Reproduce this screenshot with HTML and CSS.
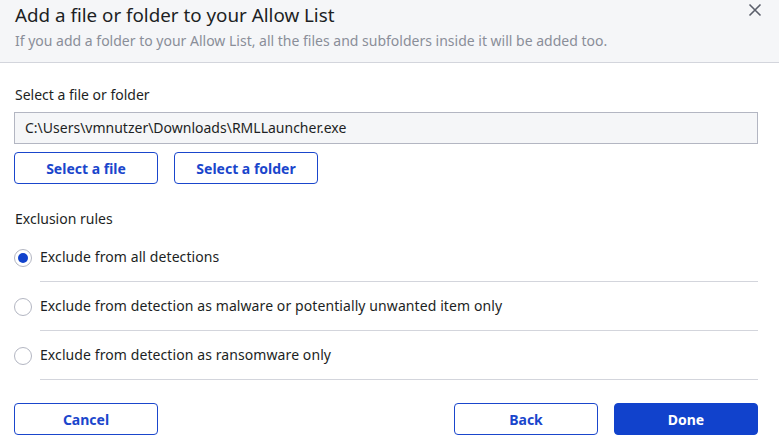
FILE: index.html
```html
<!DOCTYPE html>
<html>
<head>
<meta charset="utf-8">
<link rel="stylesheet" href="styles.css">
</head>
<body>
<div class="dialog">
  <header class="header">
    <div class="header-text">
      <h1 class="title">Add a file or folder to your Allow List</h1>
      <p class="subtitle">If you add a folder to your Allow List, all the files and subfolders inside it will be added too.</p>
    </div>
    <button class="close" aria-label="Close">
      <svg width="14" height="14" viewBox="0 0 14 14"><path d="M1.5 1.5 L12.5 12.5 M12.5 1.5 L1.5 12.5" stroke="#5b5f6b" stroke-width="1.6" fill="none"/></svg>
    </button>
  </header>
  <main class="content">
    <div class="label">Select a file or folder</div>
    <div class="path-field">C:\Users\vmnutzer\Downloads\RMLLauncher.exe</div>
    <div class="pick-row">
      <button class="btn btn-outline">Select a file</button>
      <button class="btn btn-outline">Select a folder</button>
    </div>
    <div class="label rules-label">Exclusion rules</div>
    <ul class="options">
      <li class="option">
        <span class="radio checked"></span>
        <span class="option-text">Exclude from all detections</span>
      </li>
      <li class="option">
        <span class="radio"></span>
        <span class="option-text">Exclude from detection as malware or potentially unwanted item only</span>
      </li>
      <li class="option">
        <span class="radio"></span>
        <span class="option-text">Exclude from detection as ransomware only</span>
      </li>
    </ul>
  </main>
  <footer class="footer">
    <button class="btn btn-outline">Cancel</button>
    <div class="footer-right">
      <button class="btn btn-outline">Back</button>
      <button class="btn btn-primary">Done</button>
    </div>
  </footer>
</div>
</body>
</html>
```

FILE: styles.css
```css
* { box-sizing: border-box; }
html, body { margin: 0; padding: 0; background: #ffffff; }
body {
  width: 779px;
  height: 448px;
  overflow: hidden;
  font-family: "Noto Sans", "Open Sans", sans-serif;
  color: #1d1f24;
}
.dialog { width: 779px; }
.header {
  display: flex;
  align-items: flex-start;
  height: 63px;
  background: #f5f6f8;
  border-bottom: 1px solid #d3d5dc;
  padding: 0 17px 0 15px;
}
.header-text { flex: 1; }
.title {
  margin: 2px 0 0 0;
  font-size: 18.8px;
  font-weight: 400;
  line-height: 26px;
  color: #1d1f24;
}
.subtitle {
  margin: 4px 0 0 0;
  font-size: 14px;
  line-height: 18px;
  color: #8a8e99;
}
.close {
  border: none;
  background: none;
  padding: 0;
  margin: 3px 0 0 0;
  width: 14px;
  height: 14px;
  display: flex;
}
.content { padding: 0 21px 0 14px; }
.label {
  font-size: 14px;
  line-height: 20px;
  margin-top: 22px;
  padding-left: 1px;
  color: #1d1f24;
}
.path-field {
  margin-top: 7px;
  height: 32px;
  background: #f5f6f8;
  border: 1px solid #b3b6c2;
  padding: 0 10px;
  font-size: 14px;
  line-height: 30px;
  color: #1d1f24;
}
.pick-row {
  display: flex;
  gap: 16px;
  margin-top: 8px;
}
.btn {
  width: 144px;
  height: 32px;
  border-radius: 4px;
  font-family: inherit;
  font-size: 14px;
  font-weight: 700;
  padding: 0;
  cursor: pointer;
}
.btn-outline {
  background: #ffffff;
  border: 1px solid #1a46cc;
  color: #1a46cc;
}
.btn-primary {
  background: #1142cc;
  border: 1px solid #1142cc;
  color: #ffffff;
}
.rules-label { margin-top: 25px; }
.options {
  list-style: none;
  margin: 4px 0 0 0;
  padding: 0;
}
.option {
  display: flex;
  align-items: center;
  height: 49px;
}
.radio {
  flex: none;
  width: 18px;
  height: 18px;
  border-radius: 50%;
  border: 1px solid #b3b6c2;
  background: #ffffff;
  margin-right: 8px;
  position: relative;
}
.radio.checked::after {
  content: "";
  position: absolute;
  left: 3px;
  top: 3px;
  width: 10px;
  height: 10px;
  border-radius: 50%;
  background: #1142cc;
}
.option-text {
  flex: 1;
  height: 49px;
  line-height: 48px;
  border-bottom: 1px solid #d3d5dc;
  font-size: 14px;
  letter-spacing: 0.09px;
  color: #1d1f24;
}
.footer {
  display: flex;
  justify-content: space-between;
  padding: 23px 21px 0 14px;
}
.footer-right { display: flex; gap: 16px; }
```
